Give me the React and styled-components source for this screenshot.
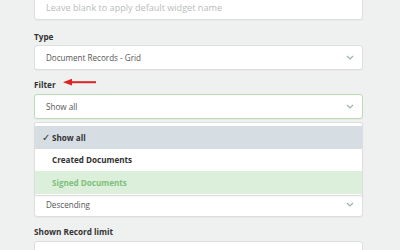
import React from "react";
import styled, { createGlobalStyle } from "styled-components";

const Global = createGlobalStyle`
  html, body {
    margin: 0;
    padding: 0;
    background: #eff1f0;
    overflow: hidden;
  }
  body {
    font-family: "Open Sans", "Liberation Sans", sans-serif;
  }
`;

const Page = styled.div`
  width: 400px;
  height: 250px;
  overflow: hidden;
  background: #eff1f0;
  padding: 0 37px 0 34px;
  box-sizing: border-box;
`;

const Form = styled.div`
  display: flex;
  flex-direction: column;
  margin-top: -5px;
`;

const Field = styled.div`
  display: flex;
  flex-direction: column;
  position: relative;
`;

const Label = styled.div`
  font-size: 8.2px;
  font-weight: 700;
  color: #333;
  line-height: 14px;
  padding: ${(p) => (p.first ? "10px 0 1px" : "8px 0 2px")};
  position: relative;
  visibility: ${(p) => (p.covered ? "hidden" : "visible")};
`;

const Control = styled.div`
  height: 25px;
  box-sizing: border-box;
  background: #fff;
  border: 1px solid ${(p) => (p.active ? "#b9dcb3" : "#dcdfdd")};
  border-radius: 3px;
  display: flex;
  align-items: center;
  padding: 0 8px 0 11px;
  font-size: ${(p) => (p.placeholder ? "9.1px" : "8.1px")};
  color: ${(p) => (p.placeholder ? "#b8bcba" : "#555")};
  box-shadow: 0 1px 1px rgba(0, 0, 0, 0.03);
`;

const Value = styled.span`
  flex: 1;
  white-space: nowrap;
  visibility: ${(p) => (p.covered ? "hidden" : "visible")};
`;

const Chevron = () => (
  <svg width="8" height="5" viewBox="0 0 8 5">
    <path d="M1 1l3 3 3-3" fill="none" stroke="#9fb0a8" strokeWidth="1.2" />
  </svg>
);

const Arrow = () => (
  <svg
    width="34"
    height="8"
    viewBox="0 0 34 8"
    style={{ position: "absolute", left: 29, top: 8 }}
  >
    <path d="M4 4.2h29" stroke="#e02222" strokeWidth="2" />
    <path d="M0 4.2l9-3.4v6.8z" fill="#e02222" />
  </svg>
);

const Menu = styled.div`
  position: absolute;
  left: 0;
  right: 0;
  top: 52px;
  background: #fff;
  border: 1px solid #dcdfdd;
  border-radius: 2px;
  padding: 3px 0 1px;
  z-index: 2;
  box-shadow: 0 1px 2px rgba(0, 0, 0, 0.04);
`;

const Item = styled.div`
  height: 22.5px;
  display: flex;
  align-items: center;
  padding-left: 17px;
  font-size: 8.1px;
  font-weight: 700;
  color: ${(p) => (p.tone === "hover" ? "#7dbf7a" : "#333")};
  background: ${(p) =>
    p.tone === "selected" ? "#d6dee3" : p.tone === "hover" ? "#dcefda" : "#fff"};
  position: relative;
`;

const Check = styled.span`
  position: absolute;
  left: 7px;
  font-size: 10px;
  font-weight: 400;
  color: #333;
`;

const SelectField = ({ label, value, active, first, covered, children }) => (
  <Field>
    <Label first={first} covered={covered}>
      {label}
      {children}
    </Label>
    <Control active={active}>
      <Value covered={covered === "all"}>{value}</Value>
      <Chevron />
    </Control>
  </Field>
);

export default function App() {
  return (
    <Page>
      <Global />
      <Form>
        <Field>
          <Control placeholder>
            <Value>Leave blank to apply default widget name</Value>
          </Control>
        </Field>
        <SelectField label="Type" value="Document Records - Grid" first />
        <Field>
          <SelectField label="Filter" value="Show all" active>
            <Arrow />
          </SelectField>
          <Menu>
            <Item tone="selected">
              <Check>✓</Check>Show all
            </Item>
            <Item>Created Documents</Item>
            <Item tone="hover">Signed Documents</Item>
          </Menu>
        </Field>
        <SelectField label="Sort by" value="Date created" covered="all" />
        <SelectField label="Sort order" value="Descending" covered="label" />
        <Field>
          <Label>Shown Record limit</Label>
          <Control placeholder>
            <Value></Value>
          </Control>
        </Field>
      </Form>
    </Page>
  );
}
